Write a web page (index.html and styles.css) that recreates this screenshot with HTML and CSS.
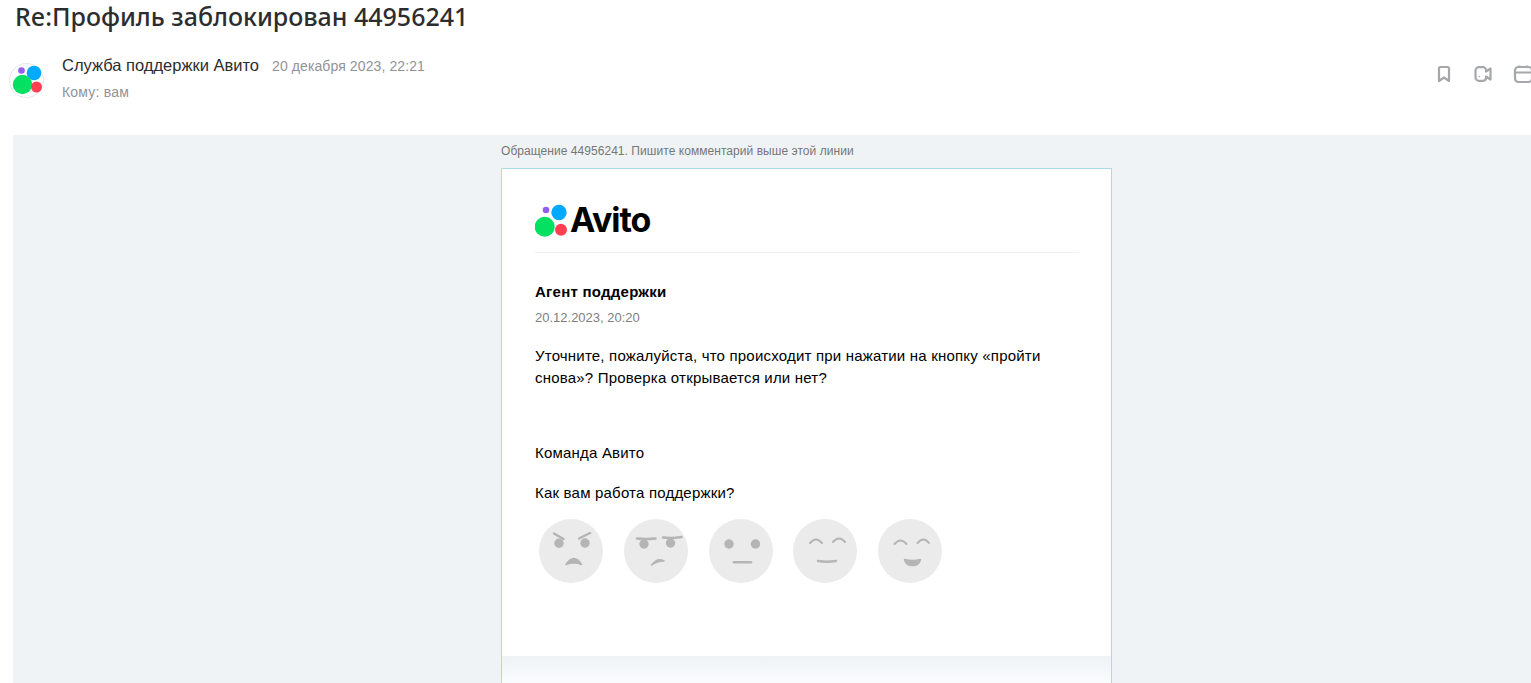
FILE: index.html
```html
<!DOCTYPE html>
<html lang="ru">
<head>
    <meta charset="UTF-8">
    <meta name="viewport" content="width=device-width, initial-scale=1.0">
    <title>Re:Профиль заблокирован 44956241</title>
    <link rel="stylesheet" href="styles.css">
</head>
<body>
    <h1 class="subject">Re:Профиль заблокирован 44956241</h1>

    <div class="mail-head">
        <svg class="avatar" viewBox="0 0 35 35">
            <circle cx="17.5" cy="17.5" r="17" fill="#fff" stroke="#e6e6e6"/>
            <circle cx="12.5" cy="7.5" r="3.3" fill="#965EEB"/>
            <circle cx="25" cy="10" r="7.3" fill="#0AF"/>
            <circle cx="13.5" cy="21.5" r="9.7" fill="#04E061"/>
            <circle cx="27.5" cy="24" r="5.5" fill="#FF4053"/>
        </svg>
        <div class="sender">
            <div class="sender-line">
                <span class="sender-name">Служба поддержки Авито</span>
                <span class="sender-date">20 декабря 2023, 22:21</span>
            </div>
            <div class="sender-to">Кому: вам</div>
        </div>
        <div class="tools">
            <svg class="tool" viewBox="0 0 20 20">
                <path d="M6.5 3h7a1.500 1.500 0 0 1 1.500 1.500V17l-5-3.500L5 17V4.500A1.500 1.500 0 0 1 6.500 3z"/>
            </svg>
            <svg class="tool" viewBox="0 0 20 20">
                <path d="M11 3.2H6.500A3.500 3.500 0 0 0 2.500 6.700v6.600a3.500 3.500 0 0 0 4 3.500H10a3 3 0 0 0 3-3v-1.300l4.500 3v-11L13 7.500V6a3 3 0 0 0-2-2.800z"/>
                <circle class="tool-dot" cx="6.5" cy="12.5" r="0.8"/>
            </svg>
            <svg class="tool" viewBox="0 0 20 20">
                <rect x="3" y="3" width="17" height="15" rx="3.5"/>
                <path d="M3 8.500h17M7.500 1.500V3M15 1.500V3"/>
            </svg>
        </div>
    </div>

    <div class="mail-body">
        <p class="reply-note">Обращение 44956241. Пишите комментарий выше этой линии</p>
        <div class="card">
            <div class="card-main">
                <div class="logo">
                    <svg class="logo-mark" viewBox="0 0 36 36">
                        <circle cx="11" cy="8" r="3.3" fill="#965EEB"/>
                        <circle cx="24" cy="10.5" r="7.7" fill="#0AF"/>
                        <circle cx="9.7" cy="24.7" r="10" fill="#04E061"/>
                        <circle cx="26" cy="27.7" r="6" fill="#FF4053"/>
                    </svg>
                    <span class="logo-word">Avito</span>
                </div>

                <div class="agent">Агент поддержки</div>
                <div class="agent-date">20.12.2023, 20:20</div>
                <p class="text">Уточните, пожалуйста, что происходит при нажатии на кнопку «пройти снова»? Проверка открывается или нет?</p>
                <p class="text team">Команда Авито</p>
                <p class="text rate">Как вам работа поддержки?</p>

                <div class="faces">
                    <svg class="face" viewBox="0 0 64 64">
                        <circle cx="32" cy="32" r="32" fill="#ebebeb"/>
                        <circle cx="20" cy="24.3" r="4.7" fill="#b5b5b5"/>
                        <circle cx="46" cy="24" r="4.7" fill="#b5b5b5"/>
                        <path class="line" d="M15 14.5l9.500 5.500M51 14l-11 5.500"/>
                        <path class="solid" d="M27 45.5q8-12 15.500 0q-8-3-15.500 0z"/>
                    </svg>
                    <svg class="face" viewBox="0 0 64 64">
                        <circle cx="32" cy="32" r="32" fill="#ebebeb"/>
                        <circle cx="20" cy="25" r="4.7" fill="#b5b5b5"/>
                        <circle cx="46.5" cy="24" r="4.7" fill="#b5b5b5"/>
                        <path class="line" d="M13 19.5q9 1 18.500 0M39 18.500q9 1 18.500-.5"/>
                        <path class="solid" d="M27.5 46q6-8 12.500-4q-6-.5-12.500 4z"/>
                    </svg>
                    <svg class="face" viewBox="0 0 64 64">
                        <circle cx="32" cy="32" r="32" fill="#ebebeb"/>
                        <circle cx="20" cy="25" r="4.7" fill="#b5b5b5"/>
                        <circle cx="46.5" cy="25" r="4.7" fill="#b5b5b5"/>
                        <path class="line" d="M25 43.3h17"/>
                    </svg>
                    <svg class="face" viewBox="0 0 64 64">
                        <circle cx="32" cy="32" r="32" fill="#ebebeb"/>
                        <path class="line thin" d="M17 24q6-7 12 0M40 23q6-7 12 0"/>
                        <path class="line" d="M25 42q9 1.500 18 0"/>
                    </svg>
                    <svg class="face" viewBox="0 0 64 64">
                        <circle cx="32" cy="32" r="32" fill="#ebebeb"/>
                        <path class="line thin" d="M16.5 25q6-7 12 0M39.500 24q6-7 11.500 0"/>
                        <path class="solid" d="M26.5 40.5q8 2 16 0q-1.500 6-8 6q-6.500 0-8-6z"/>
                    </svg>
                </div>
            </div>
            <div class="card-foot"></div>
        </div>
    </div>
</body>
</html>
```

FILE: styles.css
```css
html, body {
    height: 683px;
    overflow: hidden;
}
body {
    background-color: #FFF;
    font-family: "Liberation Sans", Arial, sans-serif;
    margin: 0;
    padding: 0;
    color: #000;
}
.subject {
    font-family: "Noto Sans", sans-serif;
    font-size: 25px;
    font-weight: 500;
    line-height: 32px;
    color: #2c2d2e;
    margin: 0;
    padding: 0 0 0 15px;
}
.mail-head {
    display: flex;
    align-items: flex-start;
    height: 103px;
    box-sizing: border-box;
    padding: 22px 0 0 9px;
}
.avatar {
    width: 35px;
    height: 35px;
    margin-top: 9px;
    flex: none;
}
.sender {
    margin-left: 18px;
    flex: 1;
}
.sender-line {
    display: flex;
    align-items: baseline;
    gap: 13px;
    line-height: 22px;
}
.sender-name {
    font-size: 16.5px;
    color: #2c2d2e;
}
.sender-date {
    font-size: 14px;
    letter-spacing: 0.1px;
    color: #919399;
}
.sender-to {
    font-size: 14px;
    letter-spacing: 0.2px;
    color: #919399;
    margin-top: 5px;
    line-height: 20px;
}
.tools {
    display: flex;
    gap: 19px;
    margin-top: 10px;
    margin-right: -1px;
}
.tool {
    width: 20px;
    height: 20px;
    fill: none;
    stroke: #a5a7ab;
    stroke-width: 2.2;
    stroke-linejoin: round;
}
.tool-dot {
    fill: #a5a7ab;
    stroke: none;
}
.mail-body {
    margin-left: 13px;
    height: 548px;
    background-color: #EFF3F6;
    padding-left: 488px;
    overflow: hidden;
}
.reply-note {
    font-size: 12px;
    line-height: 14px;
    letter-spacing: 0.05px;
    color: #777;
    margin: 0;
    padding: 9px 0 10px;
}
.card {
    width: 609px;
    border: 1px solid #A8DCEC;
    border-bottom: none;
    background-color: #FFF;
}
.card-main {
    padding: 33px 32px 0 33px;
    height: 487px;
    box-sizing: border-box;
}
.logo {
    display: flex;
    align-items: flex-start;
    height: 50px;
    border-bottom: 1px solid #f0f0f0;
}
.logo-mark {
    width: 36px;
    height: 36px;
    flex: none;
}
.logo-word {
    font-family: Inter, sans-serif;
    font-size: 34px;
    font-weight: 700;
    line-height: 36px;
    letter-spacing: -1.1px;
    margin-left: -1px;
}
.agent {
    font-size: 15px;
    font-weight: bold;
    line-height: 20px;
    letter-spacing: 0.25px;
    margin-top: 29px;
}
.agent-date {
    font-size: 13px;
    line-height: 16px;
    color: #808080;
    margin-top: 8px;
}
.text {
    font-size: 15px;
    line-height: 22px;
    letter-spacing: 0.2px;
    margin: 0;
}
.agent-date + .text {
    margin-top: 19px;
}
.team {
    margin-top: 53px;
}
.rate {
    margin-top: 18px;
}
.faces {
    display: flex;
    gap: 20.8px;
    margin-top: 15px;
    padding-left: 4px;
}
.face {
    width: 64px;
    height: 64px;
    flex: none;
}
.line {
    fill: none;
    stroke: #b5b5b5;
    stroke-width: 2.5;
    stroke-linecap: round;
}
.line.thin {
    stroke-width: 2;
}
.solid {
    fill: #b5b5b5;
    stroke: #b5b5b5;
    stroke-width: 1.5;
    stroke-linejoin: round;
}
.card-foot {
    height: 27px;
    background: linear-gradient(to bottom, #EFF3F6, #FAFCFD);
}
```
